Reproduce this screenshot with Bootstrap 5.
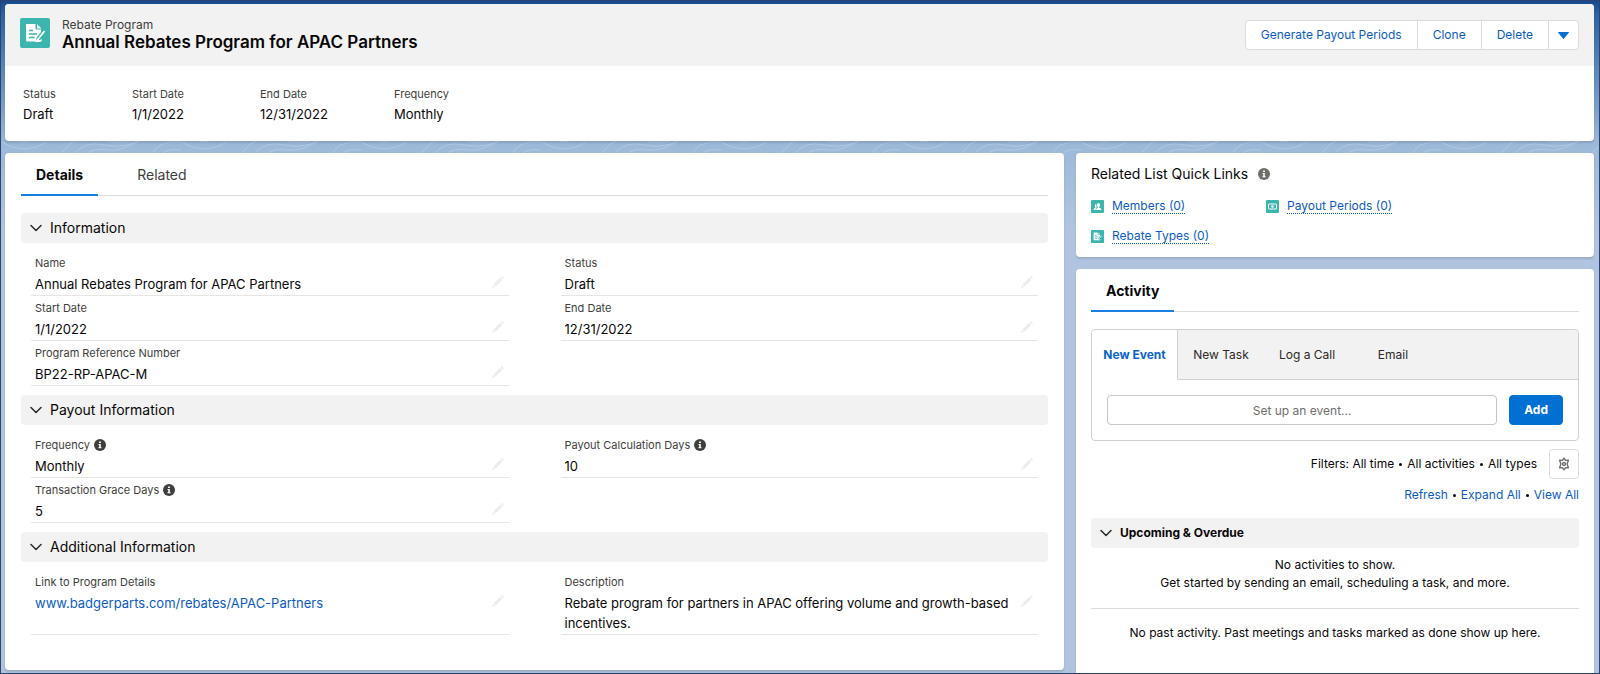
<!DOCTYPE html>
<html lang="en">
<head>
<meta charset="utf-8">
<meta name="viewport" content="width=device-width, initial-scale=1">
<title>Annual Rebates Program for APAC Partners</title>
<link href="https://cdn.jsdelivr.net/npm/bootstrap@5.3.0/dist/css/bootstrap.min.css" rel="stylesheet">
<style>
:root{--line:#dddbda;--soft:#e6e5e4;--band:#f3f2f2;--blue:#0b5cc0}
body{font-family:Inter,"Liberation Sans",sans-serif;font-size:13px;line-height:20px;color:#080707;background:#b0c4df}
a{color:var(--blue);text-decoration:none}
.shell{min-height:100vh;padding:3px 5px 3px 4px;border:1px solid #2b4272;background:
 url("data:image/svg+xml,%3Csvg xmlns='http://www.w3.org/2000/svg' width='180' height='20' fill='none' stroke='%23fff' stroke-opacity='.2'%3E%3Cpath d='M0 6q24 14 46 0M6 0q18 12 32 0M60 20q10-22 40-16t36-4M72 20q10-16 32-11t40-9M84 20q8-9 22-6t40-14M150 20q6-16 30-14M160 20q4-8 20-6'/%3E%3C/svg%3E") 0 135px/180px 20px repeat-x,
 linear-gradient(#174a8a 0,#2b62a2 12px,#9db9d9 145px,#b0c4df 230px)}
.panel{background:#fff;border-radius:4px;box-shadow:0 2px 2px rgba(0,0,0,.12)}
.head-band{background:var(--band);border-radius:4px 4px 0 0;padding:14px 15px}
.obj-icon{width:30px;height:30px;flex:none}
.title{font-size:17px;line-height:20px;font-weight:600;margin:0}
.sub{font-size:12px;line-height:14px;color:#3e3e3c}
.bar-btn{--bs-btn-font-size:12px;--bs-btn-line-height:20px;--bs-btn-padding-y:4px;--bs-btn-padding-x:15px;--bs-btn-color:var(--blue);--bs-btn-bg:#fff;--bs-btn-border-color:var(--line);--bs-btn-hover-color:var(--blue);--bs-btn-hover-bg:#f4f6f9;--bs-btn-hover-border-color:var(--line);--bs-btn-border-radius:4px}
.bar-btn.tight{--bs-btn-padding-x:9px}
.lab{font-size:11px;line-height:18px;color:#3e3e3c;font-weight:400}
.facts{display:grid;grid-template-columns:109px 128px 134px auto;padding:19px 18px 17px;margin:0}
.facts dd,.fld dd{margin:0;line-height:20px}
.facts dd{padding-top:1px}
.gap-12{gap:12px}
.page-tabs{border-bottom:1px solid var(--line);margin-bottom:17px}
.page-tabs button{border:0;background:none;padding:12px 15px 9px;margin-bottom:-1px;font-size:14px;line-height:20px;color:#3e3e3c;border-bottom:2px solid transparent}
.page-tabs .on{font-weight:700;color:#080707;border-color:#1b7ee0}
.sect{background:var(--band);border:0;border-radius:4px;height:30px;padding:0 9px;width:100%;font-size:14px;line-height:20px;color:#080707;text-align:left;gap:8px}
.sect.strong{font-size:12px;font-weight:700}
.fields{display:grid;grid-template-columns:1fr 1fr;column-gap:52px;padding:8px 10px 9px;margin:0}
.fld{border-bottom:1px solid var(--soft);padding:3px 4px 1px;min-height:45px}
.fld dd{padding-top:2px;display:flex;justify-content:space-between;align-items:flex-start}
.edit{border:0;background:none;padding:2px 1px 0;line-height:0}
.main-col{flex:1 1 0;min-width:0}
.side-col{flex:0 0 518px;margin-bottom:-3px}
.quick-panel{padding:7px 15px 13px}
.quick-title{font-size:14px;line-height:20px;font-weight:400;margin:4px 0 15px;gap:10px}
.quick-title svg{color:#706e6b}
.dotted{border-bottom:1px dotted var(--blue);line-height:14px;font-size:12px}
.quick{display:grid;grid-template-columns:175px 1fr;row-gap:15px}
.activity{padding:0 15px 16px;border-radius:4px 4px 0 0}
.composer{border:1px solid #d2d0ce;border-radius:4px}
.comp-tabs button{border:0;border-bottom:1px solid #d2d0ce;background:var(--band);padding:0 14px;height:50px;font-size:12px;color:#2b2826;min-width:86px}
.comp-tabs .on{background:#fff;color:#0b63ce;font-weight:700;border-right:1px solid #d2d0ce;border-bottom-color:#fff;padding:0 8px;border-radius:4px 0 0 0}
.comp-tabs .rest{background:var(--band);border-bottom:1px solid #d2d0ce;border-radius:0 4px 0 0}
.comp-row{padding:15px}
.ev{font-size:12px;height:30px;padding:0 12px;border-color:#c9c7c5;border-radius:4px;text-align:center}
.ev::placeholder{color:#706e6b}
.add{--bs-btn-font-size:12px;--bs-btn-bg:#0070d2;--bs-btn-border-color:#0070d2;--bs-btn-padding-y:4px;--bs-btn-padding-x:14px;--bs-btn-line-height:20px;--bs-btn-border-radius:4px;font-weight:700}
.gear{width:30px;height:30px;border:1px solid var(--line);border-radius:4px;background:#fff;padding:0;line-height:0}
.feed{font-size:12px;line-height:18px}
.feed-links{padding:7px 0 14px}
.dot{display:inline-block;width:3px;height:3px;border-radius:50%;background:#080707;margin:0 5px;vertical-align:middle}
.rule{border-top:1px solid var(--line);padding-top:15px}
</style>
</head>
<body>
<svg width="0" height="0" class="position-absolute" aria-hidden="true">
 <symbol id="chev" viewBox="0 0 12 12"><path d="M1 3.500l5 5 5-5" fill="none" stroke="#2b2826" stroke-width="1.500" stroke-linecap="round" stroke-linejoin="round"/></symbol>
 <symbol id="info" viewBox="0 0 12 12"><circle cx="6" cy="6" r="6" fill="currentColor"/><path d="M5.100 2.500h1.800v1.600H5.100zM4.500 5h2.300v3.200h.8v1H4.400v-1h.8V6h-.7z" fill="#fff"/></symbol>
 <symbol id="pen" viewBox="0 0 12 12"><path d="M0 12l1-3.200L3.200 11zM1.600 8.200L8 1.800 10.200 4 3.800 10.400zM8.700 1.100l.8-.8q.4-.4.8 0l1.400 1.400q.4.4 0 .8l-.8.8z" fill="#ececec"/></symbol>
 <symbol id="doc" viewBox="0 0 30 30"><rect width="30" height="30" rx="2" fill="#3bb5ad"/><path d="M6 6h9.500v4.500q0 1 1 1H21v2.500L17 19l-1.500 4.500H7q-1 0-1-1zM17 6l4.500 4.500H17z" fill="#fff"/><path d="M9 12.500h4M9 16h8M9 19.500h5.500" stroke="#3bb5ad" stroke-width="1.600"/><path d="M24.500 13L19 20l-2.500 3H20q1.200 0 1.200-1.500" fill="none" stroke="#fff" stroke-width="1.800"/></symbol>
 <symbol id="people" viewBox="0 0 13 13"><rect width="13" height="13" rx="1" fill="#3bb5ad"/><path d="M2.500 10q0-1.800 2-2.400Q3.700 6.700 3.700 5.600 3.700 4 5.200 4l.3 3.500Q4.500 8.500 4.500 10zM5 10q0-1.800 2-2.400-1-.9-1-2.600Q6 3 7.500 3T9 5q0 1.700-1 2.600 2.500.6 2.500 2.400z" fill="#fff"/></symbol>
 <symbol id="money" viewBox="0 0 13 13"><rect width="13" height="13" rx="1" fill="#3bb5ad"/><rect x="2.500" y="4" width="8" height="5" rx=".5" fill="none" stroke="#fff"/><circle cx="6.500" cy="6.500" r="1.300" fill="#fff"/></symbol>
</svg>
<div class="shell d-flex flex-column">
 <header class="panel mb-2">
  <div class="head-band d-flex justify-content-between align-items-center">
   <div class="d-flex">
    <svg class="obj-icon me-2"><use href="#doc"/></svg>
    <div class="ms-1"><div class="sub">Rebate Program</div><h1 class="title">Annual Rebates Program for APAC Partners</h1></div>
   </div>
   <div class="btn-group">
    <button class="btn bar-btn">Generate Payout Periods</button>
    <button class="btn bar-btn">Clone</button>
    <button class="btn bar-btn">Delete</button>
    <button class="btn bar-btn tight" aria-label="More actions"><svg width="11" height="7" viewBox="0 0 11 7"><path d="M.5.500h10L5.500 6.500z" fill="#0070d2" stroke="#0070d2" stroke-linejoin="round"/></svg></button>
   </div>
  </div>
  <dl class="facts">
   <div><dt class="lab">Status</dt><dd>Draft</dd></div>
   <div><dt class="lab">Start Date</dt><dd>1/1/2022</dd></div>
   <div><dt class="lab">End Date</dt><dd>12/31/2022</dd></div>
   <div><dt class="lab">Frequency</dt><dd>Monthly</dd></div>
  </dl>
 </header>

 <div class="d-flex flex-grow-1 mt-1 gap-12">
  <main class="panel main-col p-3 pt-0">
   <nav class="page-tabs d-flex" role="tablist">
    <button class="on" role="tab" aria-selected="true">Details</button>
    <button class="ms-4" role="tab">Related</button>
   </nav>

   <button class="sect d-flex align-items-center"><svg width="12" height="12"><use href="#chev"/></svg>Information</button>
   <dl class="fields">
    <div class="fld"><dt class="lab">Name</dt><dd>Annual Rebates Program for APAC Partners<button class="edit" aria-label="Edit Name"><svg width="12" height="12"><use href="#pen"/></svg></button></dd></div>
    <div class="fld"><dt class="lab">Status</dt><dd>Draft<button class="edit" aria-label="Edit Status"><svg width="12" height="12"><use href="#pen"/></svg></button></dd></div>
    <div class="fld"><dt class="lab">Start Date</dt><dd>1/1/2022<button class="edit" aria-label="Edit Start Date"><svg width="12" height="12"><use href="#pen"/></svg></button></dd></div>
    <div class="fld"><dt class="lab">End Date</dt><dd>12/31/2022<button class="edit" aria-label="Edit End Date"><svg width="12" height="12"><use href="#pen"/></svg></button></dd></div>
    <div class="fld"><dt class="lab">Program Reference Number</dt><dd>BP22-RP-APAC-M<button class="edit" aria-label="Edit Program Reference Number"><svg width="12" height="12"><use href="#pen"/></svg></button></dd></div>
   </dl>

   <button class="sect d-flex align-items-center"><svg width="12" height="12"><use href="#chev"/></svg>Payout Information</button>
   <dl class="fields">
    <div class="fld"><dt class="lab d-flex align-items-center">Frequency<svg class="ms-1" width="12" height="12"><use href="#info"/></svg></dt><dd>Monthly<button class="edit" aria-label="Edit Frequency"><svg width="12" height="12"><use href="#pen"/></svg></button></dd></div>
    <div class="fld"><dt class="lab d-flex align-items-center">Payout Calculation Days<svg class="ms-1" width="12" height="12"><use href="#info"/></svg></dt><dd>10<button class="edit" aria-label="Edit Payout Calculation Days"><svg width="12" height="12"><use href="#pen"/></svg></button></dd></div>
    <div class="fld"><dt class="lab d-flex align-items-center">Transaction Grace Days<svg class="ms-1" width="12" height="12"><use href="#info"/></svg></dt><dd>5<button class="edit" aria-label="Edit Transaction Grace Days"><svg width="12" height="12"><use href="#pen"/></svg></button></dd></div>
   </dl>

   <button class="sect d-flex align-items-center"><svg width="12" height="12"><use href="#chev"/></svg>Additional Information</button>
   <dl class="fields">
    <div class="fld"><dt class="lab">Link to Program Details</dt><dd><a href="#">www.badgerparts.com/rebates/APAC-Partners</a><button class="edit" aria-label="Edit Link to Program Details"><svg width="12" height="12"><use href="#pen"/></svg></button></dd></div>
    <div class="fld"><dt class="lab">Description</dt><dd>Rebate program for partners in APAC offering volume and growth-based incentives.<button class="edit" aria-label="Edit Description"><svg width="12" height="12"><use href="#pen"/></svg></button></dd></div>
   </dl>
  </main>

  <aside class="side-col d-flex flex-column gap-12">
   <section class="panel quick-panel">
    <h2 class="quick-title d-flex align-items-center">Related List Quick Links<svg width="12" height="12"><use href="#info"/></svg></h2>
    <div class="quick">
     <div class="d-flex align-items-center gap-2"><svg width="13" height="13"><use href="#people"/></svg><a class="dotted" href="#">Members (0)</a></div>
     <div class="d-flex align-items-center gap-2"><svg width="13" height="13"><use href="#money"/></svg><a class="dotted" href="#">Payout Periods (0)</a></div>
     <div class="d-flex align-items-center gap-2"><svg width="13" height="13"><use href="#doc"/></svg><a class="dotted" href="#">Rebate Types (0)</a></div>
    </div>
   </section>

   <section class="panel activity flex-grow-1">
    <nav class="page-tabs d-flex" role="tablist"><button class="on" role="tab" aria-selected="true">Activity</button></nav>
    <div class="composer">
     <div class="comp-tabs d-flex">
      <button class="on">New Event</button><button>New Task</button><button>Log a Call</button><button>Email</button><span class="rest flex-grow-1"></span>
     </div>
     <div class="comp-row d-flex gap-12">
      <input class="form-control ev" type="text" placeholder="Set up an event..." aria-label="Set up an event">
      <button class="btn btn-primary add">Add</button>
     </div>
    </div>
    <div class="d-flex justify-content-end align-items-center pt-2 feed gap-12">
     <span>Filters: All time<i class="dot"></i>All activities<i class="dot"></i>All types</span>
     <button class="gear" aria-label="Filter settings"><svg width="14" height="14" viewBox="0 0 14 14" fill="none" stroke="#706e6b" stroke-width="1.400" stroke-linejoin="round"><path d="M7 1l1.500 2.400 2.900-.1L10.100 7l1.300 3.700-2.900-.1L7 13l-1.500-2.400-2.900.1L3.900 7 2.600 3.300l2.900.1z"/><circle cx="7" cy="7" r="1.500"/></svg></button>
    </div>
    <div class="feed feed-links text-end"><a href="#">Refresh</a><i class="dot"></i><a href="#">Expand All</a><i class="dot"></i><a href="#">View All</a></div>
    <button class="sect strong d-flex align-items-center"><svg width="12" height="12"><use href="#chev"/></svg>Upcoming &amp; Overdue</button>
    <p class="feed text-center pt-2 mb-3">No activities to show.<br>Get started by sending an email, scheduling a task, and more.</p>
    <p class="feed rule text-center m-0">No past activity. Past meetings and tasks marked as done show up here.</p>
   </section>
  </aside>
 </div>
</div>
<script src="https://cdn.jsdelivr.net/npm/bootstrap@5.3.0/dist/js/bootstrap.bundle.min.js"></script>
</body>
</html>
